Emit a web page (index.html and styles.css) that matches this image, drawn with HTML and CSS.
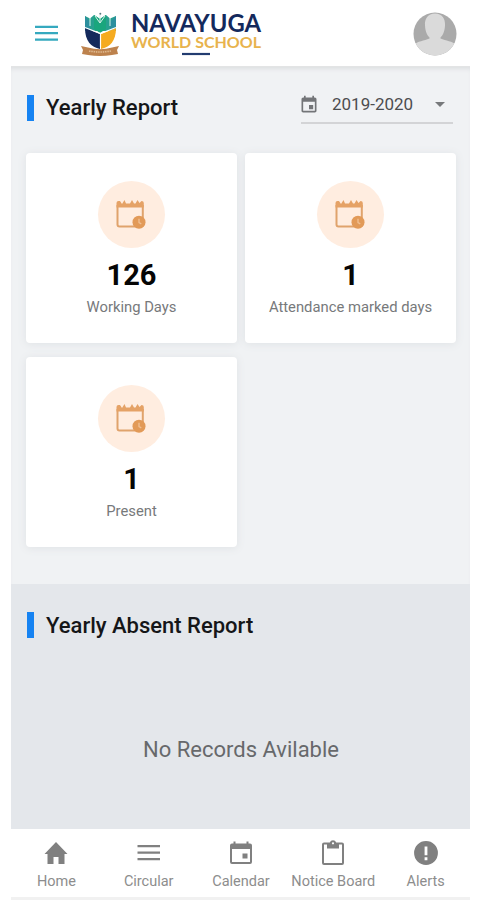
FILE: index.html
```html
<!DOCTYPE html>
<html lang="en">
<head>
<meta charset="utf-8">
<title>Yearly Report</title>
<link rel="stylesheet" href="styles.css">
</head>
<body>
<svg class="defs" width="0" height="0">
  <symbol id="day" viewBox="0 0 24 24"><path d="M17 12h-5v5h5v-5zM16 1v2H8V1H6v2H5c-1.100 0-2 .9-2 2v14c0 1.100.9 2 2 2h14c1.100 0 2-.9 2-2V5c0-1.100-.9-2-2-2h-1V1h-2zm3 18H5V8h14v11z"/></symbol>
  <symbol id="schedule" viewBox="0 0 30 30">
    <path d="M1.500 6v19.500q0 2 2 2h22q1.300 0 1.300-1.500V6" fill="none" stroke="#e0a36c" stroke-width="2"/>
    <path d="M.5 8.500V4q0-2 2-2H4l2 3 2.500-4 1.500 3.500h4L16 1l2 3.500h1.500l2-3.500 2 3L25.500 2q2.300 0 2.300 2v4.500z" fill="#e5a266"/>
    <circle cx="23" cy="23.200" r="6.500" fill="#e29a58"/>
    <path d="M23 19.700v4l2.300 1.200" fill="none" stroke="#f0c095" stroke-width="1.300"/>
  </symbol>
</svg>
<div class="app">
  <header class="header">
    <svg class="menu" viewBox="0 0 24 18"><path d="M0 2.800h23M0 9.200h23M0 15.600h23" stroke="#35a9bf" stroke-width="2.200"/></svg>
    <svg class="crest" viewBox="0 0 40 46">
      <path d="M5 5l5 2.500L14 4l6 4 6-4 4 3.500L36 5v15H5z" fill="#28a08f"/>
      <path d="M5 5l5 6v9H5zM36 5l-6 6v9h6z" fill="#2c8f9e"/>
      <path d="M14 4l6 4 6-4v14l-6 4-6-4z" fill="#1aa67d"/>
      <path d="M10 7v8M15 5l5 7 5-7M20 4v8M30 7v8" fill="none" stroke="#d5efe9" stroke-width="1"/>
      <circle cx="20.300" cy="2.800" r="1" fill="#567b80"/>
      <path d="M5 17l15 6v15C11 36 5 30 5 17z" fill="#142a5c"/>
      <path d="M36 17l-15 6v15c9-2 15-8 15-21z" fill="#f5ab20"/>
      <path d="M5 16.500l15.500 6 15.500-6M20.500 22v14" fill="none" stroke="#fff" stroke-width="1.200"/>
      <path d="M1 35l7 1.500q12 3.500 24 0l7-1.500-2 4 1 4-6 1q-12 2-24 0l-6-1 1-4z" fill="#bd824d"/>
      <path d="M9 40q11 2 22 0" fill="none" stroke="#dfb98f" stroke-width="1.600" stroke-dasharray="1.500 .8"/>
    </svg>
    <div class="brand">
      <svg class="brand-top" viewBox="0 0 134 32"><text class="brand-name" x="1" y="28" textLength="130" lengthAdjust="spacingAndGlyphs">NAVAYUGA</text></svg>
      <svg class="brand-bottom" viewBox="0 0 134 20"><text class="brand-sub" x="1" y="11.500" textLength="130" lengthAdjust="spacingAndGlyphs">WORLD SCHOOL</text><path d="M52 18h28" stroke="#223c70" stroke-width="2.200"/></svg>
    </div>
    <svg class="avatar" viewBox="0 0 44 44">
      <clipPath id="round"><circle cx="22" cy="22" r="21.500"/></clipPath>
      <g clip-path="url(#round)"><path fill="#aaa" d="M0 0h44v44H0z"/><path fill="#dadada" d="M22 1.500c-7 0-10.500 5-10 12 .3 6 2 9.500 4.500 12v1C11 29 5 28.500 0 34v10h44V34c-5-5.500-11-5-16.500-7.500v-1c2.500-2.500 4.200-6 4.500-12 .5-7-3-12-10-12z"/></g>
    </svg>
  </header>
  <main>
    <section class="report">
      <div class="title-row">
        <h2>Yearly Report</h2>
        <div class="select"><svg class="select-icon"><use href="#day"/></svg><span>2019-2020</span><i class="caret"></i></div>
      </div>
      <div class="cards">
        <article class="card"><div class="disc"><svg><use href="#schedule"/></svg></div><strong>126</strong><p>Working Days</p></article>
        <article class="card"><div class="disc"><svg><use href="#schedule"/></svg></div><strong>1</strong><p>Attendance marked days</p></article>
        <article class="card"><div class="disc"><svg><use href="#schedule"/></svg></div><strong>1</strong><p>Present</p></article>
      </div>
    </section>
    <section class="absent">
      <h2>Yearly Absent Report</h2>
      <p class="empty">No Records Avilable</p>
    </section>
  </main>
  <nav class="nav">
    <a><svg viewBox="0 0 26 26"><path d="M4.500 24V14H1.500L13 2l11.500 12h-3v10h-6v-7h-5v7z"/></svg><span>Home</span></a>
    <a><svg viewBox="0 0 26 26"><path d="M1.500 5h22.500v2.200H1.500zM1.500 11.500h22.500v2.200H1.500zM1.500 18h22.500v2.200H1.500z"/></svg><span>Circular</span></a>
    <a><svg viewBox="0 0 26 26"><path fill-rule="evenodd" d="M5.500 1.500h2V3.500h11v-2h2v2H22q2 0 2 2V22q0 2-2 2H4q-2 0-2-2V5.500q0-2 2-2h1.500zM4 9v13h18V9zM14.500 13.500h5v5h-5z"/></svg><span>Calendar</span></a>
    <a><svg viewBox="0 0 26 26"><path fill-rule="evenodd" d="M9.800 2.500a3.400 3.400 0 016.400 0H22q2 0 2 2V23q0 2-2 2H4q-2 0-2-2V4.500q0-2 2-2zM13 2.200a1.100 1.100 0 100 2.200 1.100 1.100 0 000-2.200zM4 4.500V23h18V4.500h-3V8.500H7V4.500z"/></svg><span>Notice Board</span></a>
    <a><svg viewBox="0 0 24 24"><path fill-rule="evenodd" d="M12 1a11 11 0 100 22 11 11 0 000-22zm-1.300 5h2.600v8h-2.600zm0 10h2.600v2.600h-2.600z"/></svg><span>Alerts</span></a>
  </nav>
</div>
</body>
</html>
```
FILE: styles.css
```css
* { box-sizing: border-box; }
body { margin: 0; background: #fff; font-family: Roboto, "Liberation Sans", sans-serif; }
.defs { position: absolute; }
.app { height: 900px; margin: 0 8px 0 11px; display: flex; flex-direction: column; overflow: hidden; }
.header { height: 67px; flex: none; display: flex; align-items: flex-start; background: #fff; border-bottom: 1px solid #e3e4e5; }
.menu { width: 24px; height: 18px; margin: 24px 0 0 24px; }
.crest { width: 40px; height: 46px; margin: 11px 0 0 21px; }
.brand { width: 134px; margin: 4px 0 0 10px; }
.brand svg { display: block; width: 134px; overflow: visible; }
.brand-top { height: 32px; }
.brand-bottom { height: 20px; }
.brand-name { font: 700 24px Lato, sans-serif; fill: #14295c; }
.brand-sub { font: 700 14.500px Lato, sans-serif; fill: #e8b34d; }
.avatar { width: 44px; height: 44px; margin: 12px 13px 0 auto; }
.report { height: 517px; background: #f0f2f4; padding: 19px 13px 0 15px; box-shadow: inset 0 4px 4px -2px #dddfe1; }
.title-row { height: 67px; display: flex; justify-content: space-between; align-items: flex-start; }
h2 { margin: 9px 0 0; height: 26px; padding-left: 12px; border-left: 7px solid #1683f2; font-size: 22px; font-weight: 500; line-height: 25px; color: #151618; white-space: nowrap; }
.title-row h2 { margin-left: 1px; }
.select { width: 152px; height: 38px; margin-right: 4px; border-bottom: 2px solid #d3d4d6; display: flex; align-items: center; color: #4c4d4f; font-size: 17px; }
.select-icon { width: 20px; height: 20px; margin: 2px 13px 0 -2px; fill: #737578; }
.caret { margin: 0 8px 0 auto; border: 5px solid transparent; border-top-color: #77797b; border-bottom: 0; }
.cards { display: grid; grid-template-columns: 211px 211px; grid-auto-rows: 190px; gap: 14px 8px; }
.card { background: #fff; border-radius: 4px; box-shadow: 0 1px 8px #dfe2e5; display: flex; flex-direction: column; align-items: center; padding-top: 28px; }
.disc { width: 67px; height: 67px; border-radius: 50%; background: #ffede0; display: grid; place-items: center; flex: none; padding: 0 2px 2px 0; }
.disc svg { width: 30px; height: 30px; }
.card strong { font-size: 29px; line-height: 34px; height: 34px; margin-top: 10px; font-weight: 700; color: #050505; }
.card p { margin: 5px 0 0; font-size: 14.800px; line-height: 20px; color: #77797b; white-space: nowrap; }
.absent { height: 245px; background: #e4e7eb; padding: 28px 15px 0 16px; }
.absent h2 { margin: 0; line-height: 27px; }
.empty { margin: 98px 0 0; text-align: center; font-size: 22px; line-height: 27px; color: #67696b; }
.nav { height: 68px; flex: none; padding: 11px 0 0 1px; display: grid; grid-template-columns: repeat(5, 92.3px); justify-content: center; background: #fff; }
.nav a { display: flex; flex-direction: column; align-items: center; font-size: 14.500px; line-height: 18px; color: #8d8d8d; white-space: nowrap; }
.nav svg { width: 26px; height: 26px; fill: #808080; margin-bottom: 7px; }
.app::after { content: ""; height: 4px; flex: none; background: #f1f1f1; }
```
